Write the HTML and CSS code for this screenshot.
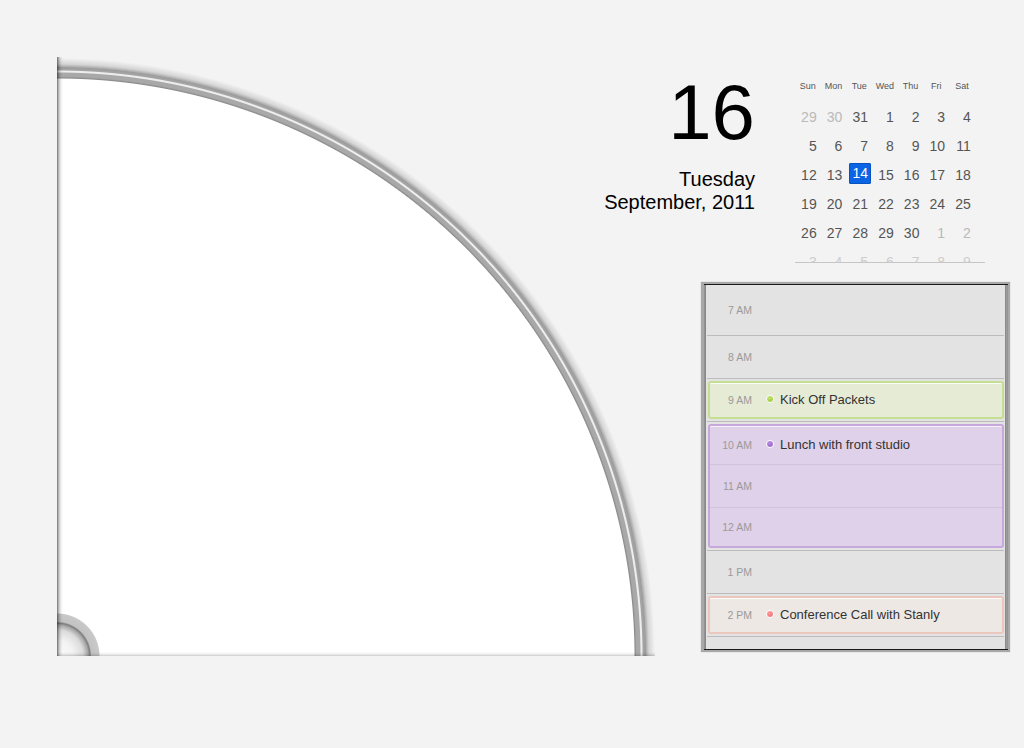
FILE: index.html
```html
<!DOCTYPE html>
<html lang="en">
<head>
<meta charset="utf-8">
<title>Calendar</title>
<link rel="stylesheet" href="styles.css">
</head>
<body>
<div class="page">
  <div class="dial"></div>
  <div class="side">
    <div class="head">
      <div class="date">
        <div class="day-num">16</div>
        <div class="weekday">Tuesday</div>
        <div class="month">September, 2011</div>
      </div>
      <div class="minical">
        <div class="dow">
          <span>Sun</span><span>Mon</span><span>Tue</span><span>Wed</span><span>Thu</span><span>Fri</span><span>Sat</span>
        </div>
        <div class="days">
          <div class="grid">
            <span class="muted">29</span><span class="muted">30</span><span>31</span><span>1</span><span>2</span><span>3</span><span>4</span>
            <span>5</span><span>6</span><span>7</span><span>8</span><span>9</span><span>10</span><span>11</span>
            <span>12</span><span>13</span><span><b class="sel">14</b></span><span>15</span><span>16</span><span>17</span><span>18</span>
            <span>19</span><span>20</span><span>21</span><span>22</span><span>23</span><span>24</span><span>25</span>
            <span>26</span><span>27</span><span>28</span><span>29</span><span>30</span><span class="muted">1</span><span class="muted">2</span>
            <span class="faded">3</span><span class="faded">4</span><span class="faded">5</span><span class="faded">6</span><span class="faded">7</span><span class="faded">8</span><span class="faded">9</span>
          </div>
        </div>
      </div>
    </div>

    <div class="panel">
      <div class="frame">
        <div class="inner">
          <div class="slot first"><div class="line"><span class="label">7 AM</span></div></div>
          <div class="slot"><div class="line"><span class="label">8 AM</span></div></div>
          <div class="slot evslot">
            <div class="event green">
              <div class="sub"><div class="line"><span class="label">9 AM</span><span class="dot"></span><span class="title">Kick Off Packets</span></div></div>
            </div>
          </div>
          <div class="slot evslot tall">
            <div class="event purple">
              <div class="sub s1"><div class="line"><span class="label">10 AM</span><span class="dot"></span><span class="title">Lunch with front studio</span></div></div>
              <div class="sub s2"><div class="line"><span class="label">11 AM</span></div></div>
              <div class="sub s3"><div class="line"><span class="label">12 AM</span></div></div>
            </div>
          </div>
          <div class="slot"><div class="line"><span class="label">1 PM</span></div></div>
          <div class="slot evslot">
            <div class="event pink">
              <div class="sub"><div class="line"><span class="label">2 PM</span><span class="dot"></span><span class="title">Conference Call with Stanly</span></div></div>
            </div>
          </div>
          <div class="rest"></div>
        </div>
      </div>
    </div>
  </div>
</div>
</body>
</html>
```

FILE: styles.css
```css
html, body {
  margin: 0;
  padding: 0;
}
body {
  background: #f3f3f3;
  font-family: "Liberation Sans", Arial, sans-serif;
  width: 1024px;
  height: 748px;
  overflow: hidden;
}
.page {
  display: flex;
  align-items: flex-start;
}

/* ---------- dial ---------- */
.dial {
  flex: 0 0 auto;
  margin: 57px 0 0 57px;
  width: 598px;
  height: 599px;
  background:
    linear-gradient(to right, rgba(0,0,0,.55) 0, rgba(0,0,0,.22) 2px, rgba(0,0,0,.06) 4px, rgba(0,0,0,0) 6px),
    linear-gradient(to top, rgba(0,0,0,.2) 0, rgba(0,0,0,.06) 2px, rgba(0,0,0,0) 4px),
    radial-gradient(circle at 0 100%, #fdfdfd 0, #f3f3f3 16px, #dcdcdc 26px, #a8a8a8 31px, #7c7c7c 33px, #c2c2c2 34.5px, #c9c9c9 42px, rgba(255,255,255,0) 43px),
    radial-gradient(circle at 0 100%, #ffffff 577px, #8c8c8c 578px, #a8a8a8 579.5px, #a9a9a9 583px, #eeeeee 584px, #eeeeee 585px, #a6a6a6 586px, #9c9c9c 588.5px, rgba(0,0,0,.3) 589px, rgba(0,0,0,.12) 592px, rgba(0,0,0,0) 598px);
}

/* ---------- side column ---------- */
.side {
  flex: 0 0 auto;
  width: 355px;
  display: flex;
  flex-direction: column;
}
.head {
  display: flex;
  align-items: flex-start;
}
.date {
  width: 100px;
  margin-top: 73px;
  display: flex;
  flex-direction: column;
  align-items: flex-end;
  color: #000;
  white-space: nowrap;
}
.day-num {
  font-size: 78px;
  line-height: 79px;
}
.weekday {
  margin-top: 16px;
  font-size: 20px;
  line-height: 23px;
}
.month {
  font-size: 20px;
  line-height: 23px;
}

/* mini calendar */
.minical {
  margin-left: 40px;
  margin-top: 81px;
  width: 190px;
}
.dow {
  display: grid;
  grid-template-columns: repeat(7, 25.7px);
  font-size: 9px;
  line-height: 11px;
  color: #555;
  text-align: center;
}
.days {
  margin-top: 11px;
  height: 159px;
  overflow: hidden;
  border-bottom: 1px solid #c6c6c6;
}
.grid {
  display: grid;
  grid-template-columns: repeat(7, 25.7px);
  font-size: 14px;
  line-height: 29px;
  color: #555;
}
.grid span {
  text-align: right;
  padding-right: 4px;
}
.grid .muted {
  color: #b9b9b9;
}
.grid .faded {
  color: #cdcdcd;
}
.sel {
  display: inline-block;
  font-weight: normal;
  color: #fff;
  background: #0b64e4;
  box-shadow: inset 0 0 0 1px #0652bf;
  border-radius: 2px;
  line-height: 21px;
  padding: 0 3px;
  margin-right: -3px;
  vertical-align: 2px;
}

/* ---------- events panel ---------- */
.panel {
  box-sizing: border-box;
  width: 309px;
  margin-top: 19px;
  margin-left: 46px;
  background: #a8a8a8;
  padding: 2px 2px 2px 3px;
  box-shadow: 0 0 1px rgba(0,0,0,.25);
}
.frame {
  border-top: 1px solid #1c1c1c;
  border-bottom: 1px solid #1c1c1c;
  background: linear-gradient(to right, #8e8e8e, #b4b4b4 2px, #b4b4b4 calc(100% - 3px), #8e8e8e);
  padding: 0 3px 0 2px;
}
.inner {
  background: #e3e3e3;
  height: 364px;
  box-shadow: -1px 0 1px rgba(0,0,0,.2), 1px 0 1px rgba(0,0,0,.2);
}
.slot {
  box-sizing: border-box;
  height: 43px;
  border-bottom: 1px solid #bcbcbc;
  margin: 0 1px;
  display: flex;
  align-items: center;
}
.slot.first {
  height: 51px;
}
.slot.tall {
  height: 129px;
}
.line {
  font-size: 13px;
  line-height: 16px;
  white-space: nowrap;
  color: #333;
}
.label {
  display: inline-block;
  width: 45px;
  text-align: right;
  font-size: 10.5px;
  color: #9a9a9a;
}
.evslot {
  align-items: stretch;
}
.event {
  flex: 1;
  box-sizing: border-box;
  margin: 2px 0 2px 1px;
  border: 2px solid;
  border-radius: 3px;
  display: flex;
  flex-direction: column;
}
.event .label {
  width: 42px;
}
.sub {
  flex: 1;
  display: flex;
  align-items: center;
}
.green {
  border-color: #c4df92;
  background: #e6ebd6;
  box-shadow: inset 0 1px 0 rgba(255,255,255,.8);
}
.purple {
  border-color: #c6a8dc;
  background: #dfd1e9;
  box-shadow: inset 0 1px 0 rgba(255,255,255,.7);
}
.purple .sub {
  flex: none;
}
.purple .s1 {
  height: 38px;
  border-bottom: 1px solid #d2c2de;
}
.purple .s2 {
  height: 42px;
  border-bottom: 1px solid #d2c2de;
}
.purple .s3 {
  height: 38px;
}
.pink {
  border-color: #eac6bd;
  background: #ede8e4;
  box-shadow: inset 0 1px 0 rgba(255,255,255,.8);
}
.dot {
  display: inline-block;
  box-sizing: border-box;
  width: 8px;
  height: 8px;
  border-radius: 50%;
  border: 1px solid #fff;
  margin: 0 6px 0 14px;
  vertical-align: 1px;
}
.green .dot {
  background: radial-gradient(circle at 40% 35%, #c4e46a, #8cc02a);
}
.purple .dot {
  background: radial-gradient(circle at 40% 35%, #b98ee0, #8a4fc0);
}
.pink .dot {
  background: radial-gradient(circle at 40% 35%, #ff9ca0, #ee5c66);
}
.title {
  color: #333;
}
.rest {
  height: 12px;
}
```
